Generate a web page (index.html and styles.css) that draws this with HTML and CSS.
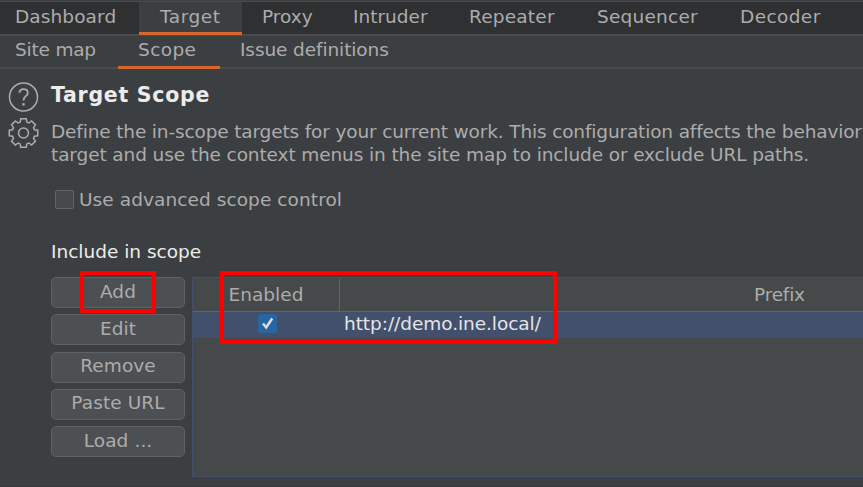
FILE: index.html
```html
<!DOCTYPE html>
<html lang="en">
<head>
<meta charset="utf-8">
<title>Target Scope</title>
<link rel="stylesheet" href="styles.css">
</head>
<body>
<nav class="tabs main-tabs">
  <div class="tab dashboard"><span>Dashboard</span></div>
  <div class="tab target active"><span>Target</span></div>
  <div class="tab proxy"><span>Proxy</span></div>
  <div class="tab intruder"><span>Intruder</span></div>
  <div class="tab repeater"><span>Repeater</span></div>
  <div class="tab sequencer"><span>Sequencer</span></div>
  <div class="tab decoder"><span>Decoder</span></div>
</nav>
<nav class="tabs sub-tabs">
  <div class="tab sitemap"><span>Site map</span></div>
  <div class="tab scope active"><span>Scope</span></div>
  <div class="tab issues"><span>Issue definitions</span></div>
</nav>
<main class="content">
  <div class="icons">
    <svg class="icon" viewBox="-15 -15 30 30"><circle r="14"/><path class="question" d="M-4-4.2C-3.8-9.2 4.3-9 4.3-4.1C4.3-.8 0-.7 0 3.4"/><path class="dot" d="M0 6.2V8.6"/></svg>
    <svg class="icon" viewBox="-15 -15 30 30"><path d="M-3.3-10.9L-2.8-14.2H2.8L3.3-10.9L5.4-10L8.1-12L12-8.1L10-5.4L10.9-3.3L14.2-2.8V2.8L10.9 3.3L10 5.4L12 8.1L8.1 12L5.4 10L3.3 10.9L2.8 14.2H-2.8L-3.3 10.9L-5.4 10L-8.1 12L-12 8.1L-10 5.4L-10.9 3.3L-14.2 2.8V-2.8L-10.9-3.3L-10-5.4L-12-8.1L-8.1-12L-5.4-10Z"/><circle r="5"/></svg>
  </div>
  <div class="panel">
    <h1>Target Scope</h1>
    <p class="description"><span class="line first">Define the in-scope targets for your current work. This configuration affects the behavior</span><span class="line second">target and use the context menus in the site map to include or exclude URL paths.</span></p>
    <label class="advanced"><span class="box"></span><span>Use advanced scope control</span></label>
    <h2>Include in scope</h2>
    <div class="scope-editor">
      <div class="buttons">
        <button><span>Add</span><i class="mark add-mark"></i></button>
        <button><span>Edit</span></button>
        <button><span>Remove</span></button>
        <button><span>Paste URL</span></button>
        <button><span>Load ...</span></button>
      </div>
      <div class="table">
        <div class="row head"><div class="cell enabled">Enabled</div><div class="cell prefix">Prefix</div></div>
        <div class="row selected"><div class="cell enabled"><svg class="check" viewBox="0 0 19 19"><rect width="19" height="19" rx="2.5"/><path d="M5 9.5L8.2 13.5L14.2 4.5"/></svg></div><div class="cell url">http://demo.ine.local/</div></div>
        <i class="mark table-mark"></i>
      </div>
    </div>
  </div>
</main>
<footer></footer>
</body>
</html>
```
FILE: styles.css
```css
* { box-sizing: border-box; }
body {
  margin: 0; width: 863px; height: 487px; overflow: hidden;
  display: flex; flex-direction: column;
  background: #3c3f41; color: #acacac;
  font: 18.5px/22px "DejaVu Sans", sans-serif; white-space: nowrap;
}
.tabs { display: flex; flex: none; border-bottom: 2px solid #4b4b4d; }
.main-tabs { height: 35px; margin-top: 1px; background: #2f3032; border-top: 1px solid #4b4b4d; }
.sub-tabs { height: 33px; }
.tab { display: flex; flex: none; padding-top: 4px; }
.sub-tabs .tab { padding-top: 3px; }
.main-tabs .active { background: #3c3f41; height: 33px; border-bottom: 3px solid #d9652f; }
.sub-tabs .active { height: 33px; border-bottom: 3px solid #d9652f; }
.dashboard { width: 139px; padding-left: 15px; letter-spacing: 0.1px; }
.target { width: 103px; padding-left: 21px; letter-spacing: 0.55px; }
.proxy { width: 91px; padding-left: 20px; }
.intruder { width: 115px; padding-left: 20px; }
.repeater { width: 128px; padding-left: 21px; letter-spacing: 0.2px; }
.sequencer { width: 144px; padding-left: 21px; letter-spacing: 0.22px; }
.decoder { width: 122px; padding-left: 20px; letter-spacing: 0.4px; }
.sitemap { width: 118px; padding-left: 15px; letter-spacing: -0.2px; }
.scope { width: 102px; padding-left: 20px; letter-spacing: 0.4px; }
.issues { width: 188px; padding-left: 20px; letter-spacing: -0.1px; }
.content { display: flex; flex: 1; padding-left: 8px; min-height: 0; }
.icons { width: 43px; flex: none; padding-top: 13px; display: flex; flex-direction: column; gap: 6px; }
.icon { width: 31px; height: 30px; fill: none; stroke: #adadad; stroke-width: 1.5; }
.icon .question { stroke-width: 1.8; }
.icon .dot { stroke-width: 2.4; }
.panel { flex: 1; min-width: 0; display: flex; flex-direction: column; }
h1 { margin: 14px 0 0; font-size: 20.5px; line-height: 24px; letter-spacing: 0.72px; color: #ececec; }
.description { margin: 13px 0 0; }
.line { display: block; line-height: 23px; }
.first { letter-spacing: -0.15px; }
.second { letter-spacing: -0.11px; }
.advanced { display: flex; align-items: center; gap: 5px; height: 22px; margin: 23px 0 0 4px; letter-spacing: 0.08px; }
.box { width: 19px; height: 19px; margin-bottom: 2px; background: #45494a; border: 1px solid #646464; border-radius: 2px; }
h2 { margin: 29px 0 0; font-size: 18.5px; line-height: 24px; font-weight: 400; color: #ececec; }
.scope-editor { display: flex; margin-top: 13px; gap: 7px; }
.buttons { width: 134px; display: flex; flex-direction: column; gap: 6.25px; flex: none; }
button {
  position: relative; width: 134px; height: 31px; padding: 0 0 2px;
  background: #4c5052; border: 1px solid #5f6162; border-radius: 5px;
  color: inherit; font: inherit; letter-spacing: 0.1px;
}
.table { position: relative; flex: 1; min-width: 0; height: 200px; background: #45494a; border: 1px solid #43516f; border-right: 0; }
.row { display: flex; }
.head { height: 34px; border-bottom: 1px solid #616365; line-height: 33px; }
.selected { height: 26px; background: #43506c; line-height: 24px; color: #e4e4e6; }
.enabled { width: 147px; flex: none; text-align: center; }
.head .enabled { border-right: 1px solid #616365; }
.prefix { flex: 1; padding-left: 414px; letter-spacing: -0.2px; }
.url { padding-left: 4px; letter-spacing: -0.06px; }
.check { display: block; width: 19px; height: 19px; margin: 2px 0 0 65px; }
.check rect { fill: #2865a3; }
.check path { fill: none; stroke: #dedede; stroke-width: 2.5; }
.mark { position: absolute; border: 4px solid #f00; border-radius: 1px; }
.add-mark { left: 28px; top: -7px; width: 76px; height: 42px; }
.table-mark { left: 27px; top: -7px; width: 337px; height: 73px; }
footer { height: 1px; flex: none; background: #353739; }
```
